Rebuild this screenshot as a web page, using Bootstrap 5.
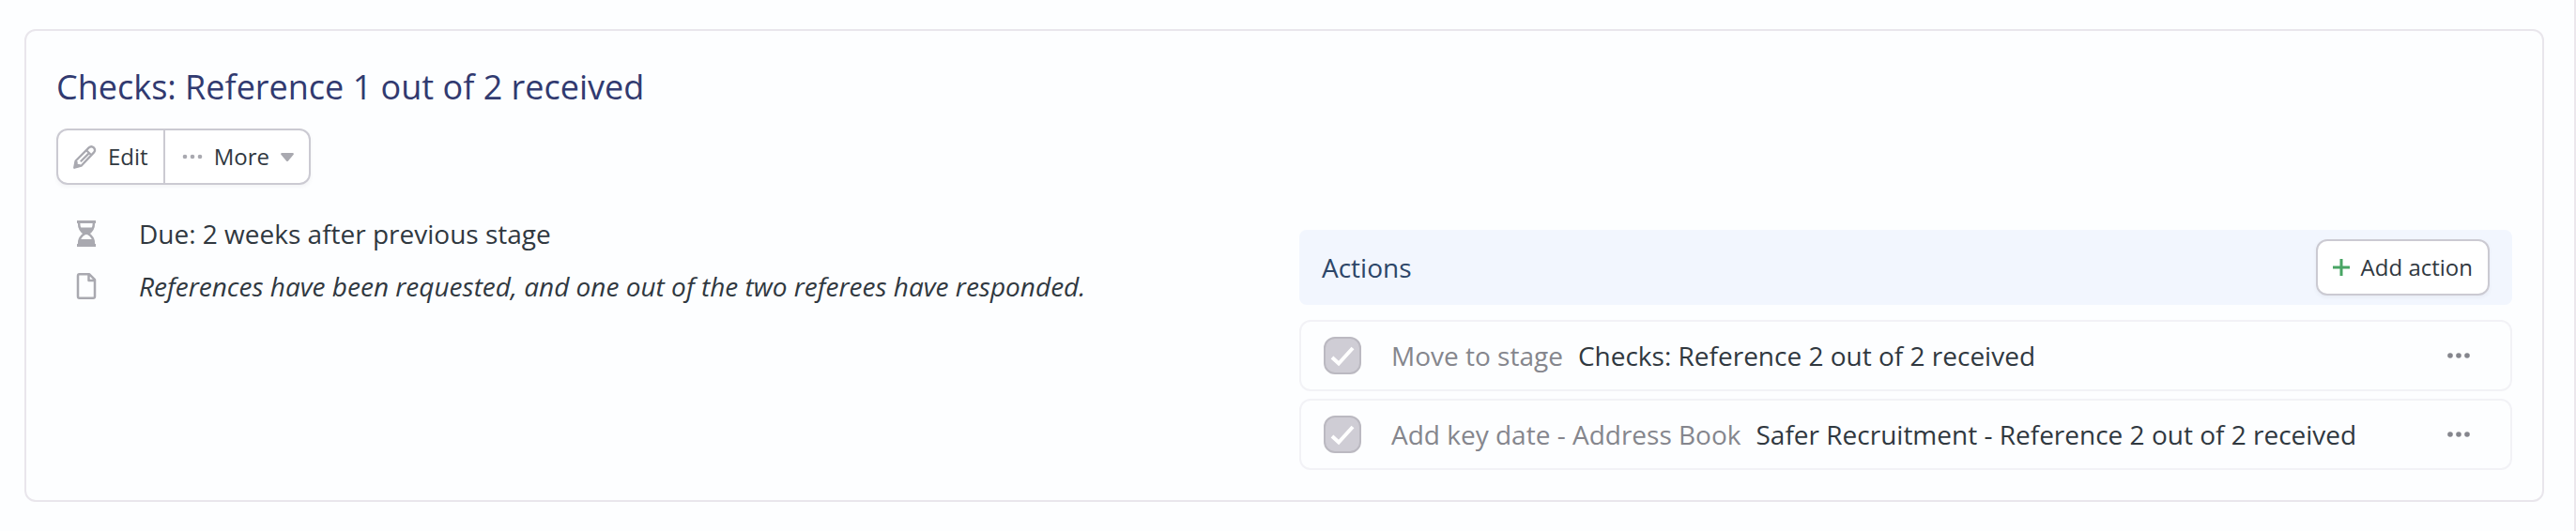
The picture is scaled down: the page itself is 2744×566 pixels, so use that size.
<!DOCTYPE html>
<html lang="en">
<head>
<meta charset="utf-8">
<meta name="viewport" content="width=device-width, initial-scale=1">
<title>Checks: Reference 1 out of 2 received</title>
<link href="https://cdn.jsdelivr.net/npm/bootstrap@5.3.0/dist/css/bootstrap.min.css" rel="stylesheet">
<style>
  :root { --ink: #30383f; --icon: #a9a9b0; --edge: #cbcad2; --surface: #fdfeff; }
  body { font-family: "Open Sans", sans-serif; font-size: 28px; line-height: 40px; color: var(--ink); background: var(--surface); }
  .page { border-right: 2px solid #ebe7ec; padding: 31px 32px 31px 26px; }
  .stage-card { border: 2px solid #e9e6ec; border-radius: 12px; background: var(--surface); padding: 32px; color: var(--ink); }
  .stage-title { font-size: 36px; line-height: 56px; font-weight: 400; color: #313a70; margin: 0 0 16px; }
  .tool-btn { --bs-btn-font-size: 24px; --bs-btn-line-height: 36px; --bs-btn-padding-y: 10px; --bs-btn-padding-x: 16px;
    --bs-btn-color: var(--ink); --bs-btn-bg: #fff; --bs-btn-border-color: var(--edge); --bs-btn-border-width: 2px;
    --bs-btn-border-radius: 12px; --bs-btn-hover-bg: #f5f6f9; --bs-btn-hover-border-color: var(--edge); --bs-btn-hover-color: var(--ink);
    display: inline-flex; align-items: center; gap: 12px; }
  .tool-group { border-radius: 12px; }
  .tool-group > .tool-btn:last-child { border-left: 0; margin-left: 0 !important; padding-left: 18px; }
  .soft-shadow { box-shadow: 0 2px 4px rgba(60, 60, 90, .06); }
  svg { display: block; flex: none; }
  .grey-icon { color: var(--icon); }
  .details { margin: 0; padding: 0 0 0 16px; }
  .details li { display: flex; align-items: center; gap: 40px; min-height: 56px; }
  .split { --bs-gutter-x: 32px; }
  .actions-head { background: #f2f6fe; border-radius: 8px; padding: 10px 24px; margin-bottom: 16px; }
  .actions-head h3 { font-size: 28px; line-height: 40px; font-weight: 500; color: #2d4668; margin: 0; }
  .action-row { border: 2px solid #f2f2f6; border-radius: 12px; padding: 16px 24px; }
  .action-row .form-check-input { width: 40px; height: 40px; margin: 0; border: 2px solid #bbb9c1; border-radius: 12px; opacity: 1; flex: none; }
  .action-row .form-check-input:checked { background-color: #cfcdd5; border-color: #bbb9c1; 
    background-size: 32px 32px; background-image: url("data:image/svg+xml,%3csvg xmlns='http://www.w3.org/2000/svg' viewBox='0 0 32 32'%3e%3cpath d='M5 18l7 6.500L27 8' fill='none' stroke='white' stroke-width='4'/%3e%3c/svg%3e"); }
  .action-row label { opacity: 1 !important; margin-left: 32px; }
  .action-kind { color: #85868d; margin-right: 16px; }
  .dots-btn { color: #85868d; padding: 0 18px; border: 0; }
</style>
</head>
<body>
<main class="page">
  <section class="stage-card">
    <h2 class="stage-title">Checks: Reference 1 out of 2 received</h2>
    <div class="btn-group tool-group soft-shadow" role="group" aria-label="Stage tools">
      <button type="button" class="btn tool-btn">
        <svg class="grey-icon" width="25" height="25" viewBox="0 0 24 24" fill="none" stroke="currentColor" stroke-width="2.200" stroke-linejoin="round"><path d="M1.200 22.800l1.300-7L16 2.300q2.500-2.300 5 0 2.300 2.500 0 5L8.200 20.800zM13.500 5l5.500 5.300M16 8l-8.500 8.500"/><path fill="currentColor" stroke="none" d="M1 23l1.200-7.500 2.300 1v2.500l2.800.500.7 2z"/></svg>
        Edit
      </button>
      <button type="button" class="btn tool-btn" aria-haspopup="true">
        <svg class="grey-icon" width="22" height="6" viewBox="0 0 22 6" fill="currentColor"><circle cx="3" cy="3" r="2.300"/><circle cx="11" cy="3" r="2.300"/><circle cx="19" cy="3" r="2.300"/></svg>
        More
        <svg class="grey-icon" width="14" height="9" viewBox="0 0 14 9" fill="currentColor"><path d="M1 0h12q1.500.5.500 2L8 8.500q-1 1-2 0L.5 2Q-.5.5 1 0z"/></svg>
      </button>
    </div>
    <div class="row split">
      <div class="col-6">
        <ul class="details list-unstyled pt-4">
          <li>
            <svg class="grey-icon" width="32" height="32" viewBox="0 0 32 32" fill="none" stroke="currentColor" stroke-width="2.500"><path stroke-width="3" d="M6 3.500h20M6 28.500h20"/><path d="M8 4c0 7 2.500 9.500 6 12-3.500 2.500-6 5-6 12M24 4c0 7-2.500 9.500-6 12 3.500 2.500 6 5 6 12"/><path fill="currentColor" stroke="none" d="M8 9.500h16c-1 3.500-3 5.500-5 6.500-2 1-4 1-6 0-2-1-4-3-5-6.500zM7 28c0-2 .3-4 1-6h16c.7 2 1 4 1 6zM12.500 15h7v3q-3.500-2-7 0z"/></svg>
            <span>Due: 2 weeks after previous stage</span>
          </li>
          <li>
            <svg class="grey-icon" width="32" height="32" viewBox="0 0 32 32" fill="none" stroke="currentColor" stroke-width="2.500" stroke-linejoin="round"><path d="M8.500 3.200H19l6 6V27q0 1.800-1.800 1.800H8.500Q7 28.800 7 27V5q0-1.800 1.500-1.800zM18.500 3.500V10H25"/></svg>
            <em>References have been requested, and one out of the two referees have responded.</em>
          </li>
        </ul>
      </div>
      <div class="col-6 pt-5">
        <div class="actions-head d-flex align-items-center justify-content-between">
          <h3>Actions</h3>
          <button type="button" class="btn tool-btn soft-shadow">
            <svg width="18" height="18" viewBox="0 0 18 18" fill="none" stroke="#49a564" stroke-width="3"><path d="M0 9h18M9 0v18"/></svg>
            Add action
          </button>
        </div>
        <div class="d-flex flex-column gap-2">
          <div class="action-row d-flex align-items-center">
            <input class="form-check-input" type="checkbox" id="move" checked disabled>
            <label class="flex-grow-1" for="move"><span class="action-kind">Move to stage</span><span>Checks: Reference 2 out of 2 received</span></label>
            <button type="button" class="btn dots-btn" aria-label="More options"><svg width="26" height="6" viewBox="0 0 26 6" fill="currentColor"><circle cx="4" cy="3" r="2.800"/><circle cx="13" cy="3" r="2.800"/><circle cx="22" cy="3" r="2.800"/></svg></button>
          </div>
          <div class="action-row d-flex align-items-center">
            <input class="form-check-input" type="checkbox" id="date" checked disabled>
            <label class="flex-grow-1" for="date"><span class="action-kind">Add key date - Address Book</span><span>Safer Recruitment - Reference 2 out of 2 received</span></label>
            <button type="button" class="btn dots-btn" aria-label="More options"><svg width="26" height="6" viewBox="0 0 26 6" fill="currentColor"><circle cx="4" cy="3" r="2.800"/><circle cx="13" cy="3" r="2.800"/><circle cx="22" cy="3" r="2.800"/></svg></button>
          </div>
        </div>
      </div>
    </div>
  </section>
</main>
<script src="https://cdn.jsdelivr.net/npm/bootstrap@5.3.0/dist/js/bootstrap.bundle.min.js"></script>
</body>
</html>
